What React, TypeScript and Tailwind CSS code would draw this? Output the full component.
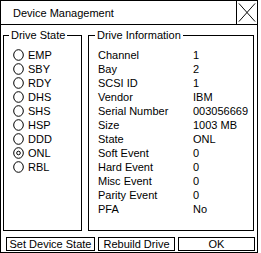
import React from "react";

const states = ["EMP", "SBY", "RDY", "DHS", "SHS", "HSP", "DDD", "ONL", "RBL"];
const info: [string, string][] = [
  ["Channel", "1"],
  ["Bay", "2"],
  ["SCSI ID", "1"],
  ["Vendor", "IBM"],
  ["Serial Number", "003056669"],
  ["Size", "1003 MB"],
  ["State", "ONL"],
  ["Soft Event", "0"],
  ["Hard Event", "0"],
  ["Misc Event", "0"],
  ["Parity Event", "0"],
  ["PFA", "No"],
];

function Radio({ checked }: { checked: boolean }) {
  return (
    <svg width="11" height="12" viewBox="0 0 11 12" className="shrink-0">
      <ellipse cx="5.5" cy="6" rx="4.8" ry="5.3" fill="white" stroke="black" strokeWidth="1" />
      {checked && <circle cx="5.5" cy="6" r="1.8" fill="none" stroke="black" strokeWidth="1" />}
    </svg>
  );
}

export default function App() {
  return (
    <div
      className="w-[261px] h-[253px] bg-white text-black text-[11px] leading-[14px]"
      style={{ fontFamily: '"Liberation Sans", Arial, sans-serif' }}
    >
      <div className="w-[258px] h-[253px] border border-black flex flex-col">
        <div className="h-[24px] border-b border-black flex shrink-0">
          <div className="flex-1 flex items-center pl-[12px]">Device Management</div>
          <div className="w-[21px] border-l border-black flex items-center justify-center">
            <svg width="21" height="23" viewBox="0 0 21 23">
              <path d="M2 2 L19 21 M19 2 L2 21" stroke="black" strokeWidth="1" fill="none" />
            </svg>
          </div>
        </div>
        <div className="flex pl-[2px] pr-[2px] pt-[3px] gap-[6px] shrink-0">
          <fieldset className="w-[79px] h-[203px] border border-black">
            <legend className="ml-[5px] px-[2px]">Drive State</legend>
            <div className="flex flex-col pt-[6px] pl-[9px]">
              {states.map((s) => (
                <div key={s} className="h-[14px] flex items-center gap-[4px]">
                  <Radio checked={s === "ONL"} />
                  <span>{s}</span>
                </div>
              ))}
            </div>
          </fieldset>
          <fieldset className="w-[166px] h-[203px] border border-black">
            <legend className="ml-[6px] px-[2px]">Drive Information</legend>
            <div className="flex flex-col pt-[6px] pl-[9px]">
              {info.map(([k, v]) => (
                <div key={k} className="h-[14px] flex items-center">
                  <span className="w-[95px]">{k}</span>
                  <span>{v}</span>
                </div>
              ))}
            </div>
          </fieldset>
        </div>
        <div className="flex pl-[5px] gap-[3px] pt-[6px] shrink-0">
          <button className="w-[89px] h-[14px] border border-black flex items-center justify-center">
            Set Device State
          </button>
          <button className="w-[77px] h-[14px] border border-black flex items-center justify-center">
            Rebuild Drive
          </button>
          <button className="w-[77px] h-[14px] border border-black flex items-center justify-center">
            OK
          </button>
        </div>
      </div>
    </div>
  );
}
